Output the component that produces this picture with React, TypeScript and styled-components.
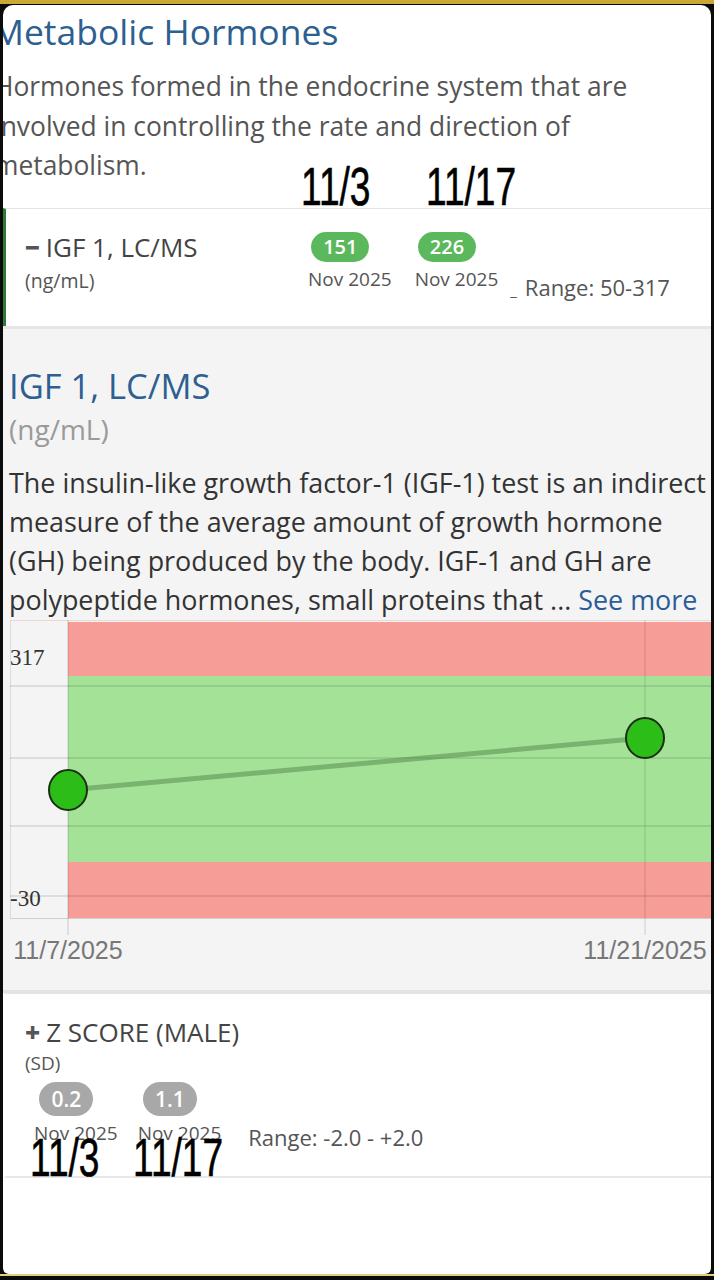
import React from "react";
import styled, { createGlobalStyle } from "styled-components";

const GlobalStyle = createGlobalStyle`
  html, body {
    margin: 0;
    padding: 0;
    background: #0b0b0b;
  }
  body {
    font-family: "Open Sans", "Noto Sans", sans-serif;
  }
`;

type Reading = { value: string; date: string };

const igfReadings: Reading[] = [
  { value: "151", date: "Nov 2025" },
  { value: "226", date: "Nov 2025" },
];

const zReadings: Reading[] = [
  { value: "0.2", date: "Nov 2025" },
  { value: "1.1", date: "Nov 2025" },
];

const Chart = () => {
  const grid = [66, 138, 206, 276];
  return (
    <ChartSvg width={704} height={350} viewBox="0 0 704 350">
      <line x1={0} y1={0.5} x2={704} y2={0.5} stroke="#ecd6d6" />
      <line x1={0.5} y1={0} x2={0.5} y2={298} stroke="#dcdcdc" />
      <rect x={58} y={2} width={646} height={54} fill="#f69d98" />
      <rect x={58} y={56} width={646} height={186} fill="#a4e397" />
      <rect x={58} y={242} width={646} height={56} fill="#f69d98" />
      {grid.map((y) => (
        <line key={y} x1={0} x2={704} y1={y} y2={y} stroke="rgba(0,0,0,0.13)" strokeWidth={1.5} />
      ))}
      <line x1={0} x2={704} y1={298.5} y2={298.5} stroke="#cfcfcf" />
      <line x1={58} x2={58} y1={0} y2={315} stroke="rgba(0,0,0,0.12)" strokeWidth={1.5} />
      <line x1={635} x2={635} y1={0} y2={315} stroke="rgba(0,0,0,0.1)" strokeWidth={1.5} />
      <line x1={58} y1={170} x2={635} y2={118} stroke="rgba(88,140,78,0.55)" strokeWidth={5} />
      <ellipse cx={58} cy={170} rx={19} ry={20} fill="#2cbd19" stroke="#1b2f14" strokeWidth={2} />
      <ellipse cx={635} cy={118} rx={19} ry={20} fill="#2cbd19" stroke="#1b2f14" strokeWidth={2} />
      <text x={0} y={45} fontFamily="'Liberation Serif', serif" fontSize={23} fill="#333">317</text>
      <text x={0} y={286} fontFamily="'Liberation Serif', serif" fontSize={23} fill="#333">-30</text>
      <text x={58} y={339} textAnchor="middle" fontFamily="'Liberation Sans', sans-serif" fontSize={25} fill="#777">11/7/2025</text>
      <text x={635} y={339} textAnchor="middle" fontFamily="'Liberation Sans', sans-serif" fontSize={25} fill="#777">11/21/2025</text>
    </ChartSvg>
  );
};

const ReadingList = ({ items, tone }: { items: Reading[]; tone: "green" | "gray" }) => (
  <>
    {items.map((r, i) => (
      <ReadingCol key={i}>
        <Pill tone={tone}>{r.value}</Pill>
        <ReadingDate>{r.date}</ReadingDate>
      </ReadingCol>
    ))}
  </>
);

const App = () => {
  return (
    <Screen>
      <GlobalStyle />
      <Panel>
        <Intro>
          <SectionTitle>Metabolic Hormones</SectionTitle>
          <Description>
            Hormones formed in the endocrine system that are
            <br />
            involved in controlling the rate and direction of
            <br />
            metabolism.
          </Description>
          <Note left={298} top={155}>11/3</Note>
          <Note left={423} top={155}>11/17</Note>
        </Intro>

        <ResultCard accent>
          <LabelCol>
            <ResultName>
              <Sign>−</Sign>IGF 1, LC/MS
            </ResultName>
            <ResultUnit>(ng/mL)</ResultUnit>
          </LabelCol>
          <Readings>
            <ReadingList items={igfReadings} tone="green" />
            <RangeText>
              <RangeMark>_</RangeMark>Range: 50-317
            </RangeText>
          </Readings>
        </ResultCard>

        <Detail>
          <DetailTitle>IGF 1, LC/MS</DetailTitle>
          <DetailUnit>(ng/mL)</DetailUnit>
          <DetailText>
            The insulin-like growth factor-1 (IGF-1) test is an indirect
            <br />
            measure of the average amount of growth hormone
            <br />
            (GH) being produced by the body. IGF-1 and GH are
            <br />
            polypeptide hormones, small proteins that ... <SeeMore>See more</SeeMore>
          </DetailText>
          <Chart />
        </Detail>

        <ResultCard stacked>
          <LabelCol>
            <ResultName>
              <Sign>+</Sign>Z SCORE (MALE)
            </ResultName>
            <ResultUnit small>(SD)</ResultUnit>
          </LabelCol>
          <Readings stacked>
            <ReadingList items={zReadings} tone="gray" />
            <RangeText wide>Range: -2.0 - +2.0</RangeText>
          </Readings>
          <Note left={24} top={137}>11/3</Note>
          <Note left={127} top={137}>11/17</Note>
        </ResultCard>
      </Panel>
      <BottomEdge />
    </Screen>
  );
};

export default App;

const Screen = styled.div`
  width: 714px;
  height: 1280px;
  box-sizing: border-box;
  display: flex;
  flex-direction: column;
  background: #0b0b0b;
  border-top: 4px solid #c9a833;
  overflow: hidden;
`;

const Panel = styled.div`
  flex: 1;
  margin: 1px 3px 0 3px;
  background: #fff;
  border-radius: 10px 10px 6px 6px;
  overflow: hidden;
`;

const BottomEdge = styled.div`
  height: 6px;
  border-top: 2px solid #e2cf7c;
  box-sizing: border-box;
  background: #0b0b0b;
`;

const Intro = styled.div`
  position: relative;
  padding: 6px 0 22px 0;
`;

const SectionTitle = styled.h1`
  margin: 0 0 0 -11px;
  font-size: 35.5px;
  line-height: 40px;
  font-weight: 500;
  color: #2d5f90;
  white-space: nowrap;
`;

const Description = styled.p`
  margin: 16px 0 0 -9px;
  font-size: 26.4px;
  line-height: 39.5px;
  color: #555;
  white-space: nowrap;
`;

const Note = styled.div<{ left: number; top: number }>`
  position: absolute;
  left: ${(p) => p.left}px;
  top: ${(p) => p.top}px;
  font-family: "Liberation Sans", Arial, sans-serif;
  font-size: 53px;
  line-height: 1;
  color: #000;
  -webkit-text-stroke: 0.6px #000;
  transform: scaleX(0.7);
  transform-origin: left top;
  white-space: nowrap;
`;

const ResultCard = styled.div<{ accent?: boolean; stacked?: boolean }>`
  position: relative;
  display: flex;
  flex-direction: ${(p) => (p.stacked ? "column" : "row")};
  align-items: flex-start;
  box-sizing: border-box;
  height: ${(p) => (p.stacked ? "185px" : "118px")};
  padding: 23px 0 0 19px;
  background: #fff;
  border-top: 1px solid #e4e4e4;
  border-left: 3px solid ${(p) => (p.accent ? "#2f7a36" : "transparent")};
  border-bottom: ${(p) => (p.stacked ? "2px solid #e8e8e8" : "none")};
`;

const LabelCol = styled.div`
  width: 283px;
  display: flex;
  flex-direction: column;
`;

const ResultName = styled.div`
  font-size: 26px;
  line-height: 30px;
  color: #444;
  white-space: nowrap;
`;

const Sign = styled.span`
  font-weight: 800;
  margin-right: 6px;
  color: #555;
`;

const ResultUnit = styled.div<{ small?: boolean }>`
  margin-top: ${(p) => (p.small ? "5px" : "8px")};
  font-size: ${(p) => (p.small ? "19px" : "19.5px")};
  line-height: 22px;
  color: #555;
`;

const Readings = styled.div<{ stacked?: boolean }>`
  display: flex;
  align-items: flex-start;
  gap: ${(p) => (p.stacked ? "20px" : "23px")};
  margin: ${(p) => (p.stacked ? "8px 0 0 9px" : "0")};
`;

const ReadingCol = styled.div`
  display: flex;
  flex-direction: column;
  align-items: center;
`;

const Pill = styled.div<{ tone: "green" | "gray" }>`
  margin-right: 19px;
  height: ${(p) => (p.tone === "green" ? "30px" : "34px")};
  line-height: ${(p) => (p.tone === "green" ? "30px" : "34px")};
  padding: 0 ${(p) => (p.tone === "green" ? "12px" : "12px")};
  border-radius: 17px;
  background: ${(p) => (p.tone === "green" ? "#5cb85c" : "#a8a8a8")};
  color: #fff;
  font-size: ${(p) => (p.tone === "green" ? "20px" : "21px")};
  font-weight: 600;
`;

const ReadingDate = styled.div`
  margin-top: 7px;
  font-size: 19px;
  line-height: 20px;
  color: #555;
  white-space: nowrap;
`;

const RangeText = styled.div<{ wide?: boolean }>`
  margin-top: 44px;
  margin-left: ${(p) => (p.wide ? "7px" : "-11px")};
  font-size: 22px;
  line-height: 22px;
  color: #555;
  white-space: nowrap;
`;

const RangeMark = styled.span`
  margin-right: 8px;
  font-size: 15px;
`;

const Detail = styled.div`
  padding: 37px 0 20px 6px;
  background: #f4f4f4;
  border-top: 3px solid #e6e6e6;
  border-bottom: 3px solid #e3e3e3;
`;

const DetailTitle = styled.h2`
  margin: 0;
  font-size: 34.5px;
  line-height: 40px;
  font-weight: 500;
  color: #2d5f90;
`;

const DetailUnit = styled.div`
  margin-top: 6px;
  font-size: 28px;
  line-height: 34px;
  color: #9a9a9a;
`;

const DetailText = styled.p`
  margin: 17px 0 0 0;
  font-size: 26.9px;
  line-height: 39.3px;
  color: #333;
  white-space: nowrap;
`;

const SeeMore = styled.span`
  color: #2a5c98;
`;

const ChartSvg = styled.svg`
  display: block;
  margin-left: 1px;
`;
